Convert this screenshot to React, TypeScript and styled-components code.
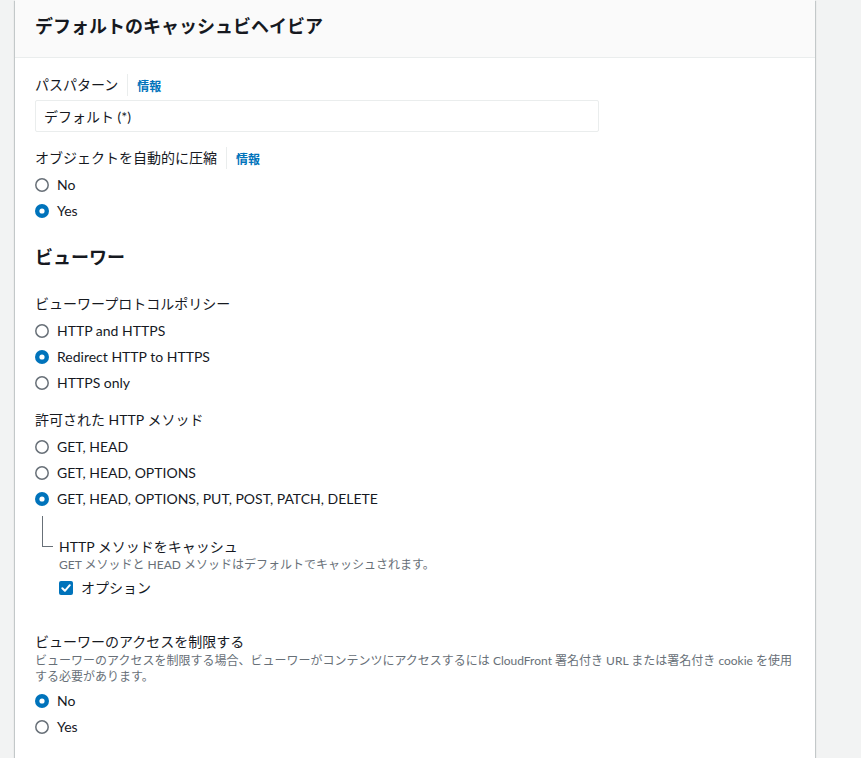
import styled, { createGlobalStyle } from 'styled-components';

const GlobalStyle = createGlobalStyle`
  html, body { margin: 0; padding: 0; background: #f2f3f3; }
  body {
    font-family: Lato, "Noto Sans CJK JP", sans-serif;
    color: #16191f;
    -webkit-font-smoothing: antialiased;
  }
  * { box-sizing: border-box; }
`;

const Page = styled.div`
  min-height: 758px; background: #f2f3f3; padding-left: 15px; overflow: hidden;
`;
const Card = styled.div`
  width: 800px; min-height: 758px; background: #fff;
  box-shadow: 0 1px 1px 0 rgba(0, 28, 36, 0.3), 1px 1px 1px 0 rgba(0, 28, 36, 0.15),
    -1px 1px 1px 0 rgba(0, 28, 36, 0.15);
`;
const CardHeader = styled.div`
  height: 58px; padding: 0 20px; background: #fafafa; border-bottom: 1px solid #eaeded;
  display: flex; align-items: center;
`;
const CardTitle = styled.h2`
  margin: 0 0 6px; font-size: 18px; font-weight: 700; line-height: 24px;
`;
const CardBody = styled.div`
  padding: 16px 20px 20px;
`;

const Field = styled.div<{ $mt?: number }>`
  margin-top: ${p => p.$mt ?? 0}px;
`;
const LabelRow = styled.div`
  display: flex; align-items: center; height: 22px;
`;
const Label = styled.span`
  font-size: 14px; line-height: 22px; color: #16191f;
`;
const InfoDivider = styled.span`
  width: 1px; height: 22px; background: #eaeded; margin: 0 9px;
`;
const InfoLink = styled.a`
  font-size: 12px; font-weight: 700; color: #0073bb; text-decoration: none; cursor: pointer;
`;
const TextInput = styled.input`
  display: block; width: 564px; height: 32px; margin-top: 4px; padding: 0 8px;
  border: 1px solid #eaeded; border-radius: 2px; background: #fff;
  font: inherit; font-size: 14px; color: #16191f; outline: none;
`;

const OptionList = styled.div`
  display: flex; flex-direction: column; gap: 4px; margin-top: 5px;
`;
const OptionRow = styled.label`
  display: flex; align-items: center; gap: 8px; height: 22px; cursor: pointer;
`;
const OptionText = styled.span`
  font-size: 14px; line-height: 22px; color: #16191f;
`;

const SectionHeading = styled.h3<{ $mt: number }>`
  margin: ${p => p.$mt}px 0 0; font-size: 18px; font-weight: 700; line-height: 24px;
`;

const Nested = styled.div`
  display: flex; align-items: flex-start; margin-top: 6px;
`;
const Connector = styled.div`
  width: 11px; height: 31px; margin: 0 6px 0 7px;
  border-left: 1px solid #687078; border-bottom: 1px solid #687078;
`;
const NestedBody = styled.div`
  padding-top: 21px;
`;
const SubLabel = styled.div`
  font-size: 14px; line-height: 20px;
`;
const Description = styled.div`
  font-size: 12px; line-height: 16px; color: #687078;
`;
const CheckRow = styled(OptionRow)`
  margin-top: 4px;
`;

const Radio = ({ checked }: { checked?: boolean }) =>
  checked ? (
    <svg width="14" height="14" viewBox="0 0 14 14">
      <circle cx="7" cy="7" r="7" fill="#0073bb" />
      <circle cx="7" cy="7" r="2.6" fill="#fff" />
    </svg>
  ) : (
    <svg width="14" height="14" viewBox="0 0 14 14">
      <circle cx="7" cy="7" r="6.2" fill="#fff" stroke="#687078" strokeWidth="1.5" />
    </svg>
  );

const CheckBox = () => (
  <svg width="14" height="14" viewBox="0 0 14 14">
    <rect x="0" y="0" width="14" height="14" rx="2" fill="#0073bb" />
    <path d="M3.3 7.2 L5.9 9.8 L10.8 4.2" fill="none" stroke="#fff" strokeWidth="2" strokeLinecap="round" strokeLinejoin="round" />
  </svg>
);

const Options = ({ items, selected }: { items: string[]; selected: number }) => (
  <OptionList>
    {items.map((t, i) => (
      <OptionRow key={t}>
        <Radio checked={i === selected} />
        <OptionText>{t}</OptionText>
      </OptionRow>
    ))}
  </OptionList>
);

export default function App() {
  return (
    <>
      <GlobalStyle />
      <Page>
        <Card>
          <CardHeader>
            <CardTitle>デフォルトのキャッシュビヘイビア</CardTitle>
          </CardHeader>
          <CardBody>
            <Field>
              <LabelRow>
                <Label>パスパターン</Label>
                <InfoDivider />
                <InfoLink>情報</InfoLink>
              </LabelRow>
              <TextInput readOnly value="デフォルト (*)" />
            </Field>

            <Field $mt={15}>
              <LabelRow>
                <Label>オブジェクトを自動的に圧縮</Label>
                <InfoDivider />
                <InfoLink>情報</InfoLink>
              </LabelRow>
              <Options items={['No', 'Yes']} selected={1} />
            </Field>

            <SectionHeading $mt={23}>ビューワー</SectionHeading>

            <Field $mt={24}>
              <Label>ビューワープロトコルポリシー</Label>
              <Options items={['HTTP and HTTPS', 'Redirect HTTP to HTTPS', 'HTTPS only']} selected={1} />
            </Field>

            <Field $mt={15}>
              <Label>許可された HTTP メソッド</Label>
              <Options
                items={['GET, HEAD', 'GET, HEAD, OPTIONS', 'GET, HEAD, OPTIONS, PUT, POST, PATCH, DELETE']}
                selected={2}
              />
              <Nested>
                <Connector />
                <NestedBody>
                  <SubLabel>HTTP メソッドをキャッシュ</SubLabel>
                  <Description>GET メソッドと HEAD メソッドはデフォルトでキャッシュされます。</Description>
                  <CheckRow>
                    <CheckBox />
                    <OptionText>オプション</OptionText>
                  </CheckRow>
                </NestedBody>
              </Nested>
            </Field>

            <Field $mt={32}>
              <Label>ビューワーのアクセスを制限する</Label>
              <Description>
                ビューワーのアクセスを制限する場合、ビューワーがコンテンツにアクセスするには CloudFront 署名付き URL または署名付き cookie を使用する必要があります。
              </Description>
              <Options items={['No', 'Yes']} selected={0} />
            </Field>
          </CardBody>
        </Card>
      </Page>
    </>
  );
}
